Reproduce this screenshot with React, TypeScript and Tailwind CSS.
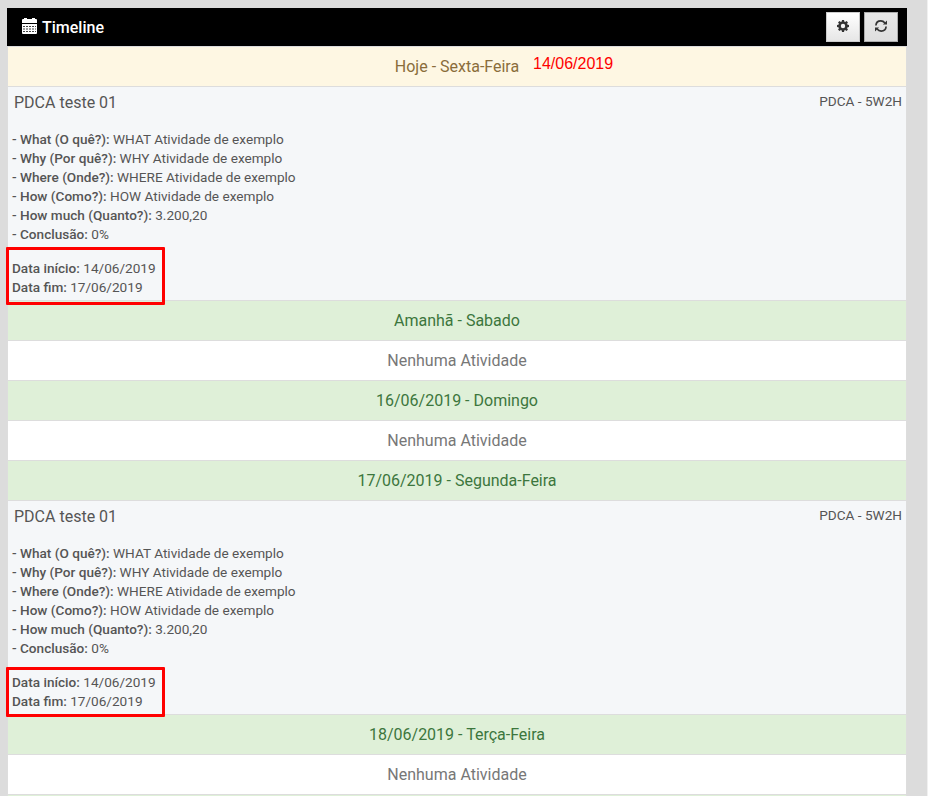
import React from "react";

const fields: [string, string][] = [
  ["What (O quê?):", "WHAT Atividade de exemplo"],
  ["Why (Por quê?):", "WHY Atividade de exemplo"],
  ["Where (Onde?):", "WHERE Atividade de exemplo"],
  ["How (Como?):", "HOW Atividade de exemplo"],
  ["How much (Quanto?):", "3.200,20"],
  ["Conclusão:", "0%"],
];

function CalendarIcon() {
  return (
    <svg width="15" height="16" viewBox="0 0 15 16" fill="#fff">
      <path d="M0 2Q0 1 1 1h1V0h3v1h5V0h3v1h1q1 0 1 1v3H0z" />
      <path d="M0 6h15v9q0 1-1 1H1q-1 0-1-1z" />
      <path
        d="M1 8.500h2M4 8.500h2M7 8.500h2M10 8.500h2M13 8.500h1M1 11h2M4 11h2M7 11h2M10 11h2M13 11h1M1 13.500h2M4 13.500h2M7 13.500h2M10 13.500h2M13 13.500h1"
        stroke="#444"
        strokeWidth="1.200"
      />
    </svg>
  );
}

function GearIcon() {
  return (
    <svg width="12" height="12" viewBox="-6 -6 12 12" fill="none" stroke="#333">
      <circle r="3.400" strokeWidth="2.400" />
      {[0, 45, 90, 135, 180, 225, 270, 315].map((a) => (
        <path key={a} d="M-1.400-3.900L-1-6H1L1.400-3.900z" fill="#333" stroke="none" transform={`rotate(${a})`} />
      ))}
    </svg>
  );
}

function RefreshIcon() {
  return (
    <svg width="12" height="12" viewBox="0 0 12 12" fill="none" stroke="#333" strokeWidth="1.700">
      <path d="M.9 5.500C1.100 2.800 3.200.9 5.800.9c1.700 0 3.100.8 4.100 2.100M11.100 6.500C10.900 9.200 8.800 11.100 6.200 11.100c-1.700 0-3.100-.8-4.100-2.100" />
      <path d="M12 .4v4.100H7.900zM0 11.600V7.500h4.100z" fill="#333" stroke="none" />
    </svg>
  );
}

function Row({ tone, children }: { tone: string; children: React.ReactNode }) {
  return (
    <div className={`h-10 border-t border-[#ddd] text-center text-base leading-[39px] ${tone}`}>
      {children}
    </div>
  );
}

const green = "bg-[#dff0d8] text-[#3c763d]";
const white = "bg-white text-[#777]";

function Activity({ box }: { box: string }) {
  return (
    <div className="h-[214px] border-t border-[#ddd] bg-[#f5f7f9] px-1 text-[13.6px] leading-[19px] text-[#555]">
      <div className="flex justify-between">
        <div className="pt-1.5 pl-0.5 text-base leading-5">PDCA teste 01</div>
        <div className="pt-[5px]">PDCA - 5W2H</div>
      </div>
      <div className="mt-[17px]">
        {fields.map(([k, v]) => (
          <div key={k}>
            <span className="font-medium">- {k}</span> {v}
          </div>
        ))}
      </div>
      <div className="relative mt-[15px]">
        <div><span className="font-medium">Data início:</span> 14/06/2019</div>
        <div><span className="font-medium">Data fim:</span> 17/06/2019</div>
        <div className={`absolute -left-[6px] w-[159px] rounded-[1px] border-3 border-[#ff0000] ${box}`} />
      </div>
    </div>
  );
}

export default function App() {
  return (
    <div className="h-[796px] w-[928px] overflow-hidden border-r border-[#f0f0f0] bg-[#dcdcdc] pt-2 pl-[7px] font-['Roboto',sans-serif]">
      <div className="w-[900px]">
        <div className="flex h-[38px] items-center bg-black pr-[9px] pl-[15px] text-white">
          <div className="-mt-[2px]"><CalendarIcon /></div>
          <div className="ml-[5px] flex-1 pt-0.5 text-base font-medium">Timeline</div>
          <div className="flex gap-1">
            <button className="flex h-[30px] w-[34px] items-center justify-center border border-[#ccc] bg-linear-to-b from-white to-[#e6e6e6] pb-0.5 text-[#333]">
              <GearIcon />
            </button>
            <button className="flex h-[30px] w-[34px] items-center justify-center border border-[#adadad] bg-linear-to-b from-[#e8e8e8] to-[#dedede] pb-0.5">
              <RefreshIcon />
            </button>
          </div>
        </div>
        <div className="border-x border-[#ddd]">
          <div className="relative">
            <Row tone="bg-[#fef7e3] text-[#8a6d3b]">Hoje - Sexta-Feira</Row>
            <span className="absolute top-[6px] left-[525px] font-['Liberation_Sans',sans-serif] text-base leading-6 text-[#ff0000]">14/06/2019</span>
          </div>
          <Activity box="-top-[12px] h-[58px]" />
          <Row tone={green}>Amanhã - Sabado</Row>
          <Row tone={white}>Nenhuma Atividade</Row>
          <Row tone={green}>16/06/2019 - Domingo</Row>
          <Row tone={white}>Nenhuma Atividade</Row>
          <Row tone={green}>17/06/2019 - Segunda-Feira</Row>
          <Activity box="-top-[6px] h-[50px]" />
          <Row tone={green}>18/06/2019 - Terça-Feira</Row>
          <Row tone={white}>Nenhuma Atividade</Row>
          <Row tone={green}>{""}</Row>
        </div>
      </div>
    </div>
  );
}
